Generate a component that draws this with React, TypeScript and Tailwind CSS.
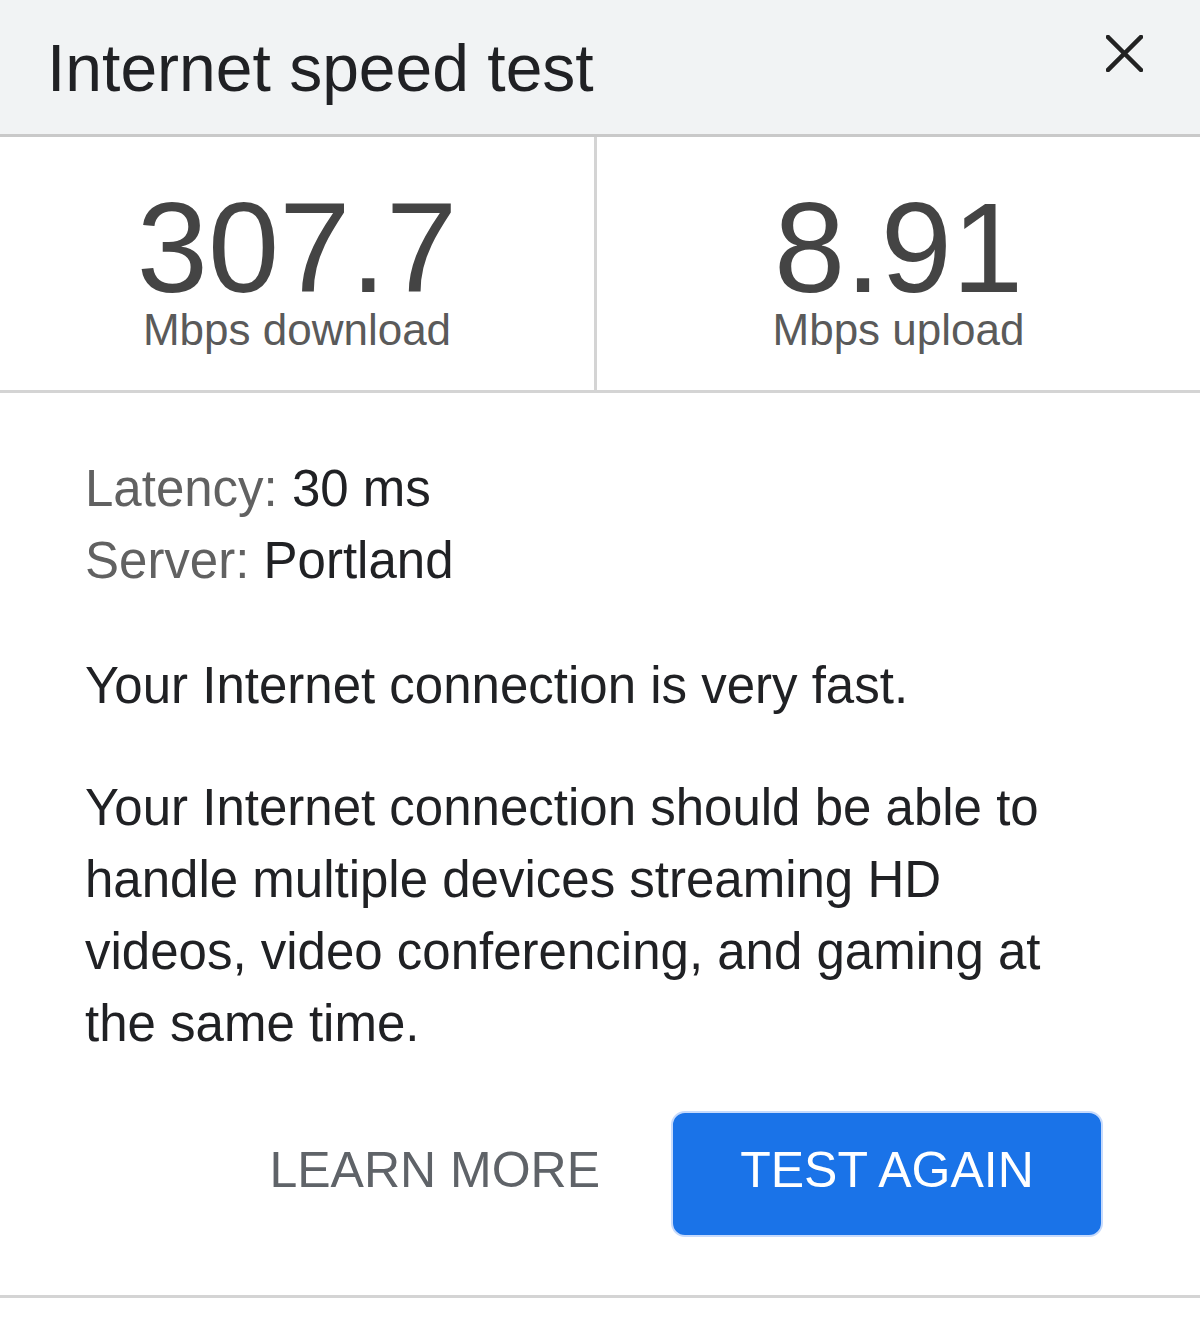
import React from "react";

const font = { fontFamily: '"Liberation Sans", Arial, sans-serif' };

const Stat = ({ value, label, divider }: { value: string; label: string; divider?: boolean }) => (
  <div
    className={`flex flex-col items-center pt-[56px] ${divider ? "border-r-[3px] border-[#d4d4d4]" : ""}`}
  >
    <div className="text-[128px] leading-[110px] text-[#444444]">{value}</div>
    <div className="mt-[5px] text-[44px] leading-[44px] text-[#5a5a5a]">{label}</div>
  </div>
);

export default function App() {
  return (
    <div className="w-full min-h-[1337px] bg-white" style={font}>
      {/* Header */}
      <div className="flex h-[137px] items-start justify-between border-b-[3px] border-[#c9c9c9] bg-[#f1f3f4] pl-[47px] pr-[57px]">
        <h1 className="pt-[35px] text-[66px] leading-none font-normal text-[#202124]">
          Internet speed test
        </h1>
        <button className="mt-[35px]" aria-label="Close">
          <svg width="37" height="37" viewBox="0 0 37 37">
            <path d="M2 2 L35 35 M35 2 L2 35" stroke="#222222" strokeWidth="4.5" strokeLinecap="square" />
          </svg>
        </button>
      </div>

      {/* Results */}
      <div className="grid h-[256px] grid-cols-[597px_1fr] border-b-[3px] border-[#d4d4d4]">
        <Stat value="307.7" label="Mbps download" divider />
        <Stat value="8.91" label="Mbps upload" />
      </div>

      {/* Details */}
      <div className="pl-[85px] pt-[60px] text-[51px] leading-[72px] text-[#202124]">
        <div>
          <span className="text-[#616161]">Latency:</span> 30 ms
        </div>
        <div>
          <span className="text-[#616161]">Server:</span> Portland
        </div>
        <p className="mt-[53px]">Your Internet connection is very fast.</p>
        <p className="mt-[50px] w-[1000px]">
          Your Internet connection should be able to handle multiple devices streaming HD
          videos, video conferencing, and gaming at the same time.
        </p>
      </div>

      {/* Actions */}
      <div className="flex items-center justify-end gap-[71px] pr-[97px] pt-[51px] pb-[58px] border-b-[3px] border-[#d4d4d4]">
        <button className="pb-[8px] text-[50px] leading-none text-[#5f6368]">LEARN MORE</button>
        <button className="flex h-[126px] w-[432px] items-center justify-center rounded-[14px] border-2 border-[#c6dafc] bg-[#1a73e8] pb-[8px] text-[50px] leading-none text-white">
          TEST AGAIN
        </button>
      </div>
    </div>
  );
}
